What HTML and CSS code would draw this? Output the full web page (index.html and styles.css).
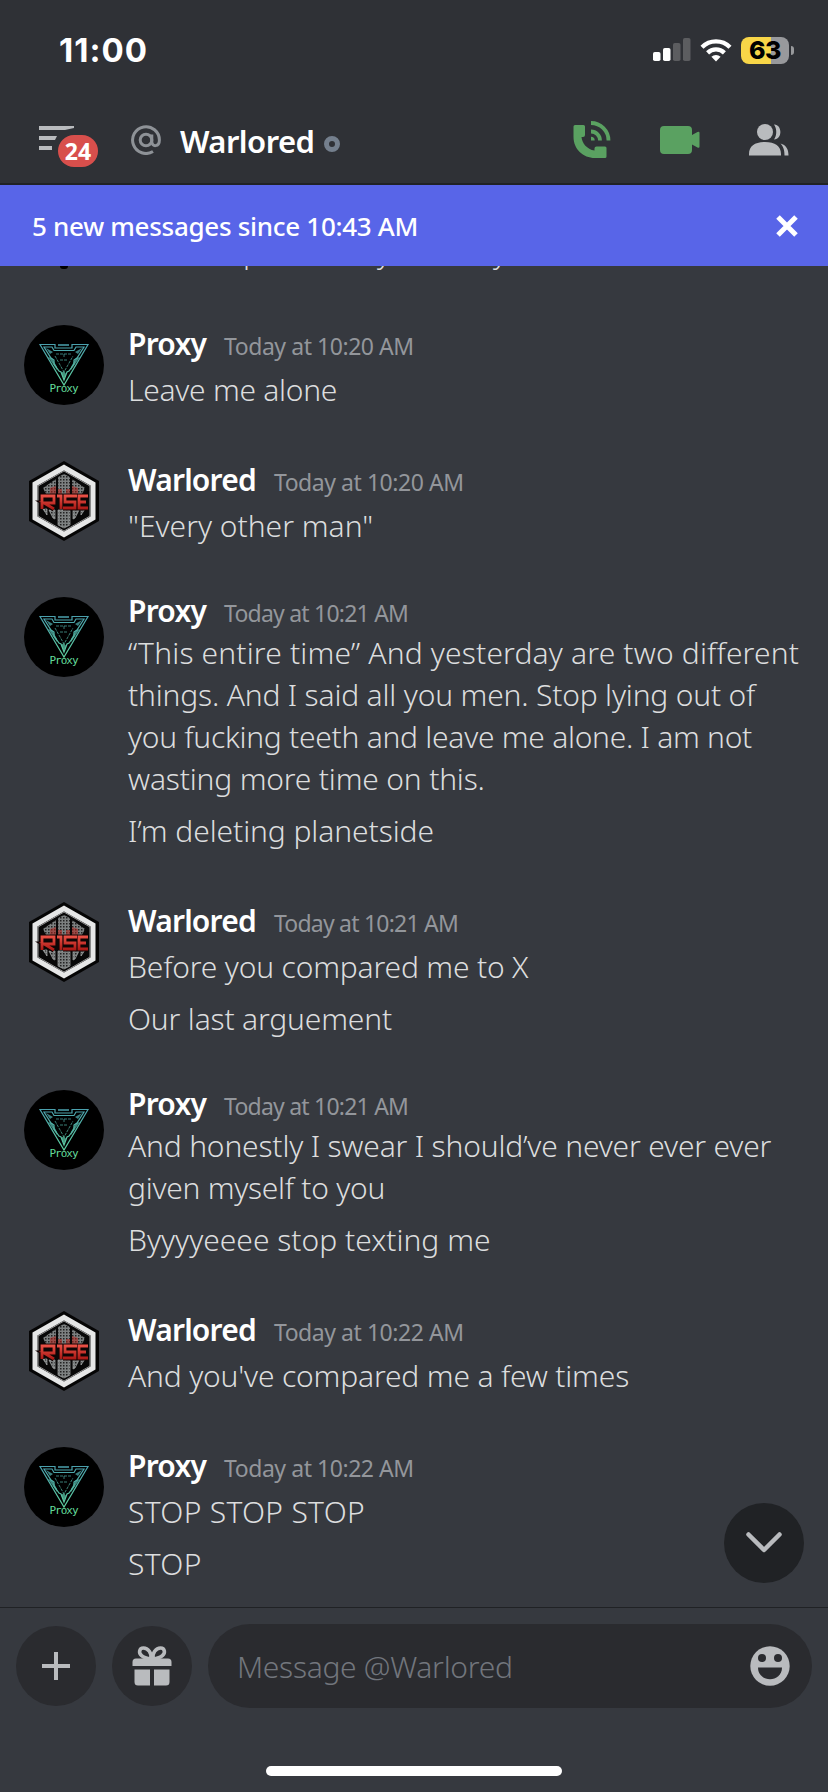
FILE: index.html
```html
<!DOCTYPE html>
<html lang="en">
<head>
<meta charset="utf-8">
<title>Warlored</title>
<link rel="stylesheet" href="styles.css">
</head>
<body>
<svg class="defs" width="0" height="0" aria-hidden="true">
  <defs>
    <linearGradient id="teal" x1="0" y1="18" x2="0" y2="70" gradientUnits="userSpaceOnUse"><stop offset="0" stop-color="#4a9fae"/><stop offset="1" stop-color="#63dc9c"/></linearGradient>
    <linearGradient id="red" x1="0" y1="33" x2="0" y2="49" gradientUnits="userSpaceOnUse"><stop offset="0" stop-color="#f0564a"/><stop offset="1" stop-color="#a51512"/></linearGradient>
    <pattern id="mesh" width="3" height="3" patternUnits="userSpaceOnUse"><rect width="3" height="3" fill="#7c8080"/><rect width="1.5" height="1.5" fill="#222"/></pattern>
    <symbol id="proxy" viewBox="0 0 80 80">
      <circle cx="40" cy="40" r="40" fill="#000"/>
      <g fill="none" stroke="url(#teal)" stroke-width="1.2">
        <path d="M16 19.500H31V23H48V19.500H64L40 60Z"/>
        <path d="M20 22H28L30 25.500H50L52 22H60L53 33L50 35V39L45 46L43 47L40 55L37 47L35 46L30 39V35L27 33Z"/>
        <path d="M32 29H48M40 29V33M36 35H44M31 31L40 47L49 31" stroke-width=".7" stroke-dasharray="3 1"/>
      </g>
      <path d="M24 32L33 45V42L28 33ZM56 32L47 45V42L52 33ZM37 48L40 46L42 49L40 54ZM34 19H45V21H34ZM22 23L29 27L26 29ZM58 23L51 27L54 29Z" fill="url(#teal)" opacity=".75"/>
      <text x="25.500" y="67" textLength="29" class="proxy-mark" fill="#63dc9c">Proxy</text>
    </symbol>
    <symbol id="rise" viewBox="0 0 80 80">
      <path d="M40 0L75 20V60L40 80L5 60V20Z" fill="#050505"/>
      <path d="M40 6.500L69 23V57L40 73.500L11 57V23Z" fill="#080808" stroke="#e6e7e7" stroke-width="5"/>
      <path d="M40 10L66 25V55L40 70L14 55V25Z" fill="none" stroke="#999" stroke-width="1"/>
      <path d="M19 27L32 18V33H22ZM34 16L40 13L46 16V33H34ZM48 18L61 27L58 33H48Z" fill="url(#mesh)"/>
      <path d="M26 27L32 25V34H26ZM34 28H38V34H34ZM42 28H46V34H42ZM48 25L54 27V34H48Z" fill="#b2221c" opacity=".55"/>
      <path d="M25 49L31 49V58L29 57ZM34 49H46V64L40 67L34 64ZM49 49H55L51 57L49 58ZM19 48H23V54ZM57 48H61L57 54Z" fill="url(#mesh)" stroke="#c0c2c2" stroke-width=".6"/>
      <g fill="none" stroke="#120303" stroke-width="5"><path d="M18 48V35H30V42H20L30 48M33 35H37V48M53 35H41V41H51V47H39M64 35H55V47H64M55 41H62"/></g>
      <g fill="none" stroke="url(#red)" stroke-width="2.800"><path d="M18 48V35H30V42H20L30 48M33 35H37V48M53 35H41V41H51V47H39M64 35H55V47H64M55 41H62"/></g>
    </symbol>
  </defs>
</svg>
<div class="app">
  <div class="statusbar">
    <div class="clock">11:00</div>
    <div class="indicators">
      <svg width="38" height="24" viewBox="0 0 38 24"><rect x="0" y="14" width="7.500" height="9" rx="1.800" fill="#fff"/><rect x="10" y="10" width="7.500" height="13" rx="1.800" fill="#fff"/><rect x="20" y="5" width="7.500" height="18" rx="1.800" fill="#5c5d60"/><rect x="30" y="0" width="7.500" height="23" rx="1.800" fill="#5c5d60"/></svg>
      <svg width="32" height="24" viewBox="0 0 32 24"><path d="M16 23.500L11.400 18.800A6.500 6.500 0 0 1 20.600 18.800Z" fill="#fff"/><path d="M7.600 14.900A12 12 0 0 1 24.400 14.900M2 9.200A19.800 19.800 0 0 1 30 9.200" fill="none" stroke="#fff" stroke-width="4.300"/></svg>
      <div class="battery"><span>63</span></div>
      <div class="battery-tip"></div>
    </div>
  </div>
  <header class="topbar">
    <div class="menu">
      <svg width="38" height="28" viewBox="0 0 38 28"><path d="M0 0H35V2L26 4H0ZM0 10H18L16 14H0ZM0 20H13V24H0Z" fill="#b9bbbe"/></svg>
      <span class="badge">24</span>
    </div>
    <svg class="at" width="30" height="30" viewBox="0 0 30 30" fill="none" stroke="#8e9297" stroke-width="3"><circle cx="15" cy="15" r="5.800"/><path d="M20.800 9.500V16.500C20.800 22.500 28.400 22 28.400 15A13.400 13.400 0 1 0 22 26.500"/></svg>
    <h1>Warlored</h1>
    <span class="presence"></span>
    <div class="actions">
      <svg width="38" height="38" viewBox="0 0 38 38"><path d="M2 4H10.500Q12 4 12 5.500V14Q12 16 10 16H8.500C9 22 14 28.500 21.500 29.500V27.500Q21.500 25.500 23.500 25.500H32Q33.500 25.500 33.500 27V35.500Q33.500 37 32 37H22C10 37 .5 28 .5 16V5.500Q.5 4 2 4Z" fill="#5aa161"/><path d="M18 17.700A1.800 1.800 0 0 1 19.800 19.500M18 10.500A9 9 0 0 1 27 19.500M18 2A17.500 17.500 0 0 1 35.500 19.500" fill="none" stroke="#5aa161" stroke-width="3.800"/></svg>
      <svg width="40" height="28" viewBox="0 0 40 28"><path d="M4 0H28Q32 0 32 4V9L37.500 6Q39.500 5 39.500 7V20.500Q39.500 22.500 37.500 21.500L32 18.500V24Q32 28 28 28H4Q0 28 0 24V4Q0 0 4 0Z" fill="#5aa161"/></svg>
      <svg width="40" height="32" viewBox="0 0 40 32" fill="#b9bbbe"><circle cx="16" cy="8" r="8"/><path d="M0 31.500V30C0 22 6 18 16 18S32 22 32 30V31.500ZM25 .5C33 0 34 15 25 15.500C28 11 28 5 25 .5ZM31.500 19.500C37 21 39.500 25 39.500 31.500H35.500C35.500 26 34.500 23 31.500 19.500Z"/></svg>
    </div>
  </header>
  <div class="newbar">
    <span class="newtext">5 new messages since 10:43 AM</span>
    <svg width="22" height="22" viewBox="0 0 22 22"><path d="M2 2L20 20M20 2L2 20" stroke="#fff" stroke-width="5"/></svg>
  </div>
  <main class="messages">
    <div class="peek"><i class="tip"></i><span class="p1">p</span><span class="p2">y</span><span class="p3">y</span><span class="p4">,</span><span class="p5">,</span></div>
    <section class="group">
      <svg class="avatar"><use href="#proxy"/></svg>
      <div class="body"><div class="head"><b>Proxy</b><time>Today at 10:20 AM</time></div><p class="snug">Leave me alone</p></div>
    </section>
    <section class="group">
      <svg class="avatar"><use href="#rise"/></svg>
      <div class="body"><div class="head"><b>Warlored</b><time>Today at 10:20 AM</time></div><p class="plain">"Every other man"</p></div>
    </section>
    <section class="group tight">
      <svg class="avatar"><use href="#proxy"/></svg>
      <div class="body"><div class="head"><b>Proxy</b><time class="narrow">Today at 10:21 AM</time></div><p><span class="loose">“This entire time” And yesterday are two different</span><br>things. And I said all you men. Stop lying out of<br><span class="snug">you fucking teeth and leave me alone. I am not</span><br>wasting more time on this.</p><p class="near">I’m deleting planetside</p></div>
    </section>
    <section class="group">
      <svg class="avatar"><use href="#rise"/></svg>
      <div class="body"><div class="head"><b>Warlored</b><time class="narrow">Today at 10:21 AM</time></div><p>Before you compared me to X</p><p>Our last arguement</p></div>
    </section>
    <section class="group tight">
      <svg class="avatar"><use href="#proxy"/></svg>
      <div class="body"><div class="head"><b>Proxy</b><time class="narrow">Today at 10:21 AM</time></div><p>And honestly I swear I should’ve never ever ever<br><span class="snug">given myself to you</span></p><p class="plain">Byyyyeeee stop texting me</p></div>
    </section>
    <section class="group">
      <svg class="avatar"><use href="#rise"/></svg>
      <div class="body"><div class="head"><b>Warlored</b><time>Today at 10:22 AM</time></div><p>And you've compared me a few times</p></div>
    </section>
    <section class="group">
      <svg class="avatar"><use href="#proxy"/></svg>
      <div class="body"><div class="head"><b>Proxy</b><time>Today at 10:22 AM</time></div><p class="wide">STOP STOP STOP</p><p class="wide">STOP</p></div>
    </section>
    <div class="jump"><svg width="36" height="22" viewBox="0 0 36 22"><path d="M2.500 2.500L18 18L33.500 2.500" fill="none" stroke="#b9bbbe" stroke-width="4.500" stroke-linecap="round" stroke-linejoin="round"/></svg></div>
  </main>
  <footer class="composer">
    <div class="round"><svg width="28" height="28" viewBox="0 0 28 28"><path d="M14 0V28M0 14H28" stroke="#b9bbbe" stroke-width="4"/></svg></div>
    <div class="round"><svg width="40" height="40" viewBox="0 0 40 40"><g fill="none" stroke="#b9bbbe" stroke-width="3.600"><path d="M19 13C20 7 16 2 11.500 2C7 2 6.500 7 9.500 9.500C12 12 15 12.500 19 13ZM21 13C20 7 24 2 28.500 2C33 2 33.500 7 30.500 9.500C28 12 25 12.500 21 13Z"/></g><path d="M4 12.500H36Q39.500 12.500 39.500 16V20H.5V16Q.5 12.500 4 12.500ZM2.500 23.500H18V39.500H6Q2.500 39.500 2.500 36ZM22 23.500H37.500V36Q37.500 39.500 34 39.500H22Z" fill="#b9bbbe"/></svg></div>
    <div class="input"><span class="hint">Message @Warlored</span>
      <svg width="40" height="40" viewBox="0 0 40 40"><circle cx="20" cy="20" r="19.700" fill="#b9bbbe"/><circle cx="12" cy="12" r="4" fill="#2a2b2f"/><circle cx="28" cy="12" r="4" fill="#2a2b2f"/><path d="M8 21.500H32C32 37 8 37 8 21.500Z" fill="#2a2b2f"/></svg>
    </div>
  </footer>
  <div class="home"></div>
</div>
</body>
</html>
```
FILE: styles.css
```css
* { box-sizing: border-box; }
body { margin: 0; background: #36393f; font-family: "Noto Sans", sans-serif; color: #dcddde; }
svg { display: block; flex: none; }
.defs { position: absolute; }
.app { width: 828px; height: 1792px; display: flex; flex-direction: column; overflow: hidden; }
.statusbar { height: 100px; background: #2f3136; display: flex; justify-content: space-between; align-items: center; padding: 0 34px 0 59px; flex: none; }
.clock { font: 700 33px/40px "Inter", sans-serif; color: #fff; letter-spacing: 1px; }
.indicators { display: flex; align-items: center; }
.indicators svg { margin-right: 9px; }
.battery { width: 48px; height: 27px; border-radius: 8px; background: linear-gradient(90deg, #f8d648 63%, #98999c 63%); color: #000; font: 800 25px/27px "Inter", sans-serif; text-align: center; letter-spacing: -.5px; }
.battery-tip { width: 3px; height: 9px; margin-left: 2px; border-radius: 0 4px 4px 0; background: #98999c; }
.topbar { height: 85px; background: #2f3136; border-bottom: 2px solid #202225; display: flex; align-items: center; padding: 0 39px 4px 39px; flex: none; }
.menu { position: relative; width: 92px; }
.badge { position: absolute; left: 19px; top: 9px; width: 40px; height: 32px; border-radius: 16px; background: #d84f4c; color: #fff; font: 700 23px/32px "Noto Sans", sans-serif; text-align: center; }
.topbar h1 { margin: 2px 0 0 19px; font-size: 31px; line-height: 42px; font-weight: 600; color: #fff; letter-spacing: -.55px; }
.presence { width: 16px; height: 16px; border: 5px solid #747f8d; border-radius: 50%; margin: 9px 0 0 10px; }
.actions { display: flex; align-items: center; gap: 49px; margin-left: auto; }
.newbar { height: 81px; background: #5865e8; display: flex; align-items: center; justify-content: space-between; padding: 0 30px 0 32px; flex: none; color: #fff; z-index: 1; }
.newtext { font-size: 26px; line-height: 36px; font-weight: 500; letter-spacing: -.3px; }
.messages { height: 1342px; flex: none; position: relative; border-bottom: 1px solid #202225; }
.peek { height: 59px; display: flex; overflow: hidden; }
.peek span { font-size: 30px; line-height: 42px; font-weight: 300; margin-top: -35px; width: 18px; }
.peek .tip { width: 8px; height: 3px; background: #000; margin-left: 60px; border-radius: 0 0 4px 4px; }
.peek .p1 { margin-left: 175px; }
.peek .p2 { margin-left: 116px; }
.peek .p3 { margin-left: 98px; }
.peek .p4, .peek .p5 { margin-top: -37px; margin-left: 4px; color: #96989b; }
.peek .p5 { margin-left: 41px; }
.group { display: flex; gap: 24px; padding-left: 24px; margin-bottom: 51px; }
.avatar { width: 80px; height: 80px; }
.body { display: flex; flex-direction: column; padding-top: 1px; margin-bottom: -1px; }
.head { display: flex; align-items: baseline; height: 42px; margin-top: -3px; white-space: nowrap; }
.head b { font-size: 30px; line-height: 42px; font-weight: 600; color: #fff; letter-spacing: -.8px; }
.head time { font-size: 23px; line-height: 32px; color: #93969b; margin-left: 18px; letter-spacing: -.45px; }
.head .narrow { letter-spacing: -.78px; }
.group p { margin: 10px 0 0; font-size: 30px; line-height: 42px; font-weight: 300; white-space: nowrap; letter-spacing: -.18px; }
.group .snug { letter-spacing: -.27px; }
.group .near { letter-spacing: -.08px; }
.group .plain { letter-spacing: 0; }
.group .loose { letter-spacing: .16px; }
.group .wide { letter-spacing: .3px; }
.group .head + p { margin-top: 4px; }
.tight .head { margin-top: -8px; }
.tight .head + p { margin-top: 0; }
.jump { position: absolute; right: 24px; bottom: 24px; width: 80px; height: 80px; border-radius: 50%; background: #202225; display: flex; align-items: center; justify-content: center; }
.proxy-mark { font: 400 11px "DejaVu Sans Mono", monospace; }
.composer { display: flex; gap: 16px; padding: 16px 16px 0; align-items: center; flex: none; }
.round { width: 80px; height: 80px; border-radius: 50%; background: #2a2b2f; display: flex; align-items: center; justify-content: center; }
.input { flex: 1; height: 84px; border-radius: 42px; background: #2a2b2f; display: flex; align-items: center; justify-content: space-between; padding: 0 22px 0 29px; }
.hint { font-size: 30px; line-height: 42px; font-weight: 300; color: #72767d; letter-spacing: -.3px; margin-top: 2px; }
.home { width: 296px; height: 10px; border-radius: 5px; background: #fff; margin: 58px auto 0; flex: none; }
```
